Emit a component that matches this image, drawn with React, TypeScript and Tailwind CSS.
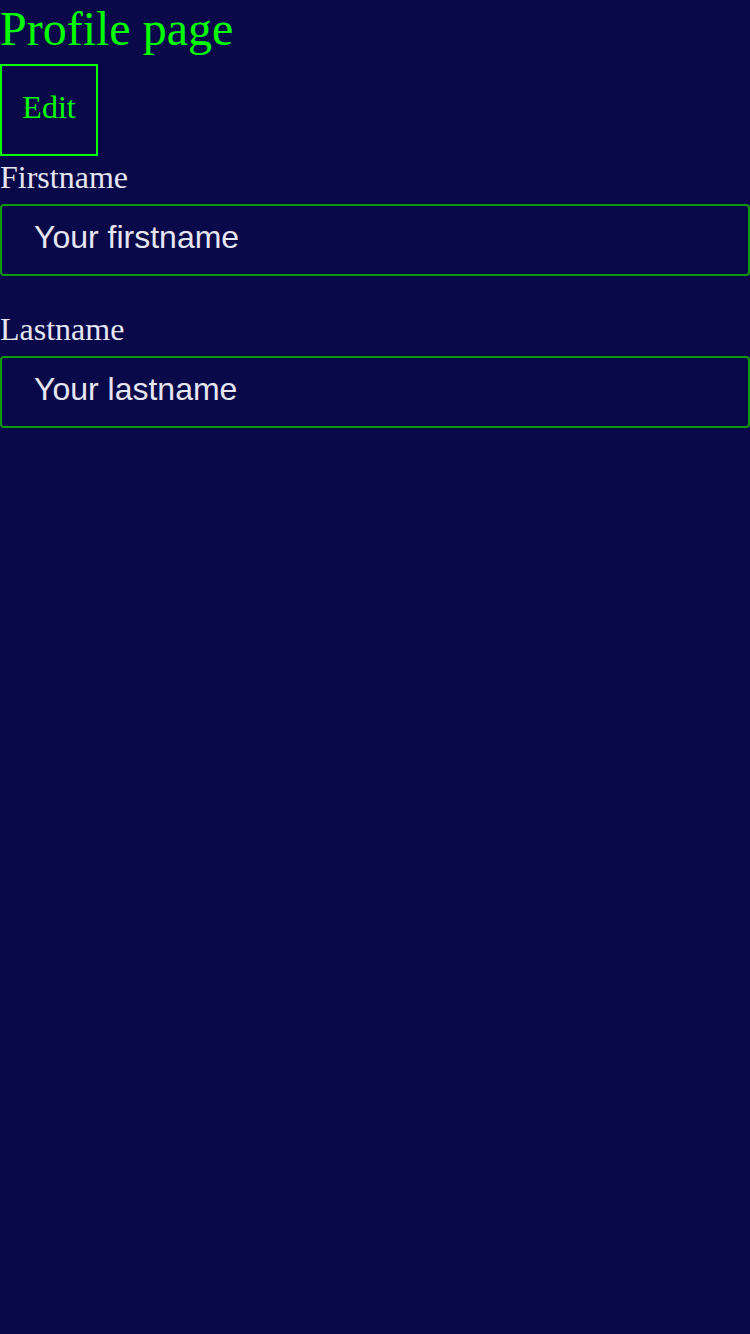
import React from 'react';

const Field: React.FC<{ label: string; placeholder: string }> = ({ label, placeholder }) => (
    <div className="flex flex-col">
        <label className="pt-[1px] text-[32px] leading-[37px] text-[#e6e6f2] font-['Liberation_Serif',serif]">{label}</label>
        <input
            placeholder={placeholder}
            className="mt-[8px] h-[72px] w-full rounded-[4px] border-2 border-[#0b9a0b] bg-transparent pb-[5px] pl-[32px] text-[32px] text-[#e6e6f2] outline-none placeholder:text-[#e6e6f2] font-['Liberation_Sans',sans-serif]"
        />
    </div>
);

export default function App() {
    return (
        <div className="min-h-[1334px] w-full bg-[#090848] font-['Liberation_Serif',serif]">
            <h1 className="pt-[2px] text-[48px] leading-[54px] text-[#00ff00]">Profile page</h1>
            <button className="mt-[8px] flex h-[92px] w-[98px] items-center justify-center border-2 border-[#00ff00] pb-[6px] text-[32px] text-[#00ff00]">
                Edit
            </button>
            <div className="mt-[2px] flex flex-col gap-[34px]">
                <Field label="Firstname" placeholder="Your firstname" />
                <Field label="Lastname" placeholder="Your lastname" />
            </div>
        </div>
    );
}
